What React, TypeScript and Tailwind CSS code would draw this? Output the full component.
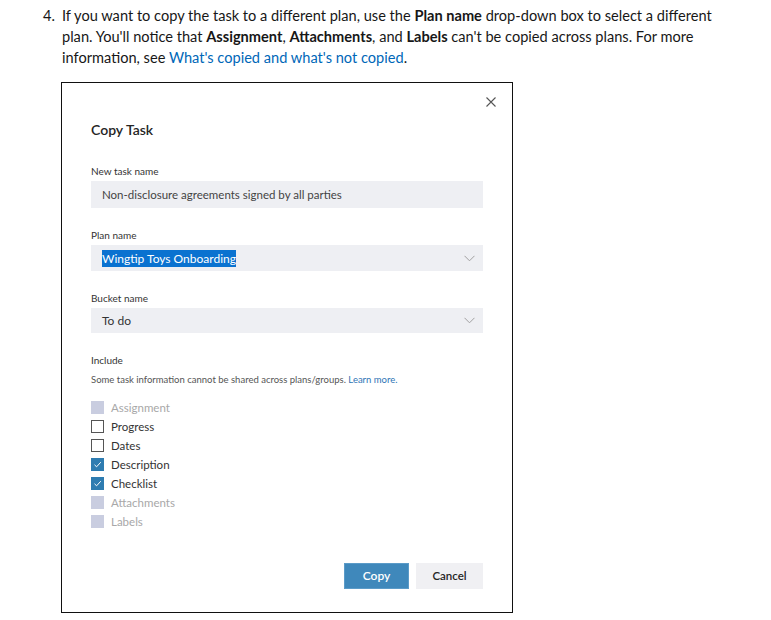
import React from "react";

const Chevron = () => (
  <svg width="11" height="7" viewBox="0 0 11 7" fill="none">
    <path d="M0.5 0.8 L5.5 5.8 L10.5 0.8" stroke="#a0a0a0" strokeWidth="1" />
  </svg>
);

type Item = { label: string; state: "disabled" | "off" | "on" };

const items: Item[] = [
  { label: "Assignment", state: "disabled" },
  { label: "Progress", state: "off" },
  { label: "Dates", state: "off" },
  { label: "Description", state: "on" },
  { label: "Checklist", state: "on" },
  { label: "Attachments", state: "disabled" },
  { label: "Labels", state: "disabled" },
];

const Box = ({ state }: { state: Item["state"] }) => {
  if (state === "disabled") return <div className="w-[13px] h-[13px] bg-[#c9cde0]" />;
  if (state === "off") return <div className="w-[13px] h-[13px] border border-[#555] bg-white box-border" />;
  return (
    <div className="w-[13px] h-[13px] bg-[#2e7cb1] flex items-center justify-center">
      <svg width="9" height="9" viewBox="0 0 9 9" fill="none">
        <path d="M1.5 4.8 L3.6 6.8 L7.8 2.2" stroke="#ffffff" strokeWidth="1" />
      </svg>
    </div>
  );
};

export default function App() {
  return (
    <div className="w-[771px] h-[620px] bg-white overflow-hidden" style={{ fontFamily: "Lato, 'Noto Sans', sans-serif" }}>
      <div className="flex pt-[5px] text-[14.6px] leading-[21px] text-[#171717]">
        <div className="w-[62px] pl-[43px] shrink-0">4.</div>
        <div className="w-[672px]">
          If you want to copy the task to a different plan, use the <b>Plan name</b> drop-down box to select a different plan. You'll notice that <b>Assignment</b>, <b>Attachments</b>, and <b>Labels</b> can't be copied across plans. For more information, see <span className="text-[#0067b8]">What's copied and what's not copied</span>.
        </div>
      </div>

      <div className="ml-[61px] mt-[14px] w-[452px] h-[531px] border border-[#111] box-border flex flex-col px-[29px]">
        <div className="mt-[14px] h-[10px] flex justify-end mr-[-13px]">
          <svg width="10" height="10" viewBox="0 0 10 10" fill="none">
            <path d="M0.5 0.5 L9.5 9.5 M9.5 0.5 L0.5 9.5" stroke="#555" strokeWidth="1.1" />
          </svg>
        </div>
        <div className="mt-[13px] text-[14px] leading-[20px] font-semibold text-[#252525]">Copy Task</div>

        <div className="mt-[24px] text-[10px] leading-[14px] text-[#333]">New task name</div>
        <div className="mt-[3px] h-[27px] bg-[#eeeff3] flex items-center pl-[11px] text-[11.5px] text-[#444]">
          Non-disclosure agreements signed by all parties
        </div>

        <div className="mt-[20px] text-[10px] leading-[14px] text-[#333]">Plan name</div>
        <div className="mt-[3px] h-[26px] bg-[#eeeff3] flex items-center justify-between pl-[11px] pr-[8px] text-[12px]">
          <span className="bg-[#0a72d0] text-white leading-[17px]">Wingtip Toys Onboarding</span>
          <Chevron />
        </div>

        <div className="mt-[20px] text-[10px] leading-[14px] text-[#333]">Bucket name</div>
        <div className="mt-[3px] h-[25px] bg-[#eeeff3] flex items-center justify-between pl-[11px] pr-[8px] text-[12px] text-[#333]">
          <span>To do</span>
          <Chevron />
        </div>

        <div className="mt-[20px] text-[10px] leading-[14px] text-[#333]">Include</div>
        <div className="mt-[6px] text-[9.5px] leading-[14px] text-[#555]">
          Some task information cannot be shared across plans/groups. <span className="text-[#2e74b5]">Learn more.</span>
        </div>

        <div className="mt-[11px] flex flex-col">
          {items.map((it) => (
            <div key={it.label} className="h-[19px] flex items-center gap-[7px]">
              <Box state={it.state} />
              <span className={`text-[11.5px] ${it.state === "disabled" ? "text-[#a8a8a8]" : "text-[#333]"}`}>{it.label}</span>
            </div>
          ))}
        </div>

        <div className="mt-[32px] flex justify-end gap-[7px]">
          <div className="w-[65px] h-[26px] bg-[#3f88bb] border border-[#5b9bc8] box-border flex items-center justify-center text-white text-[12px] font-semibold">Copy</div>
          <div className="w-[67px] h-[26px] bg-[#f0f0f3] flex items-center justify-center text-[#252525] text-[11.5px] font-semibold">Cancel</div>
        </div>
      </div>
    </div>
  );
}
